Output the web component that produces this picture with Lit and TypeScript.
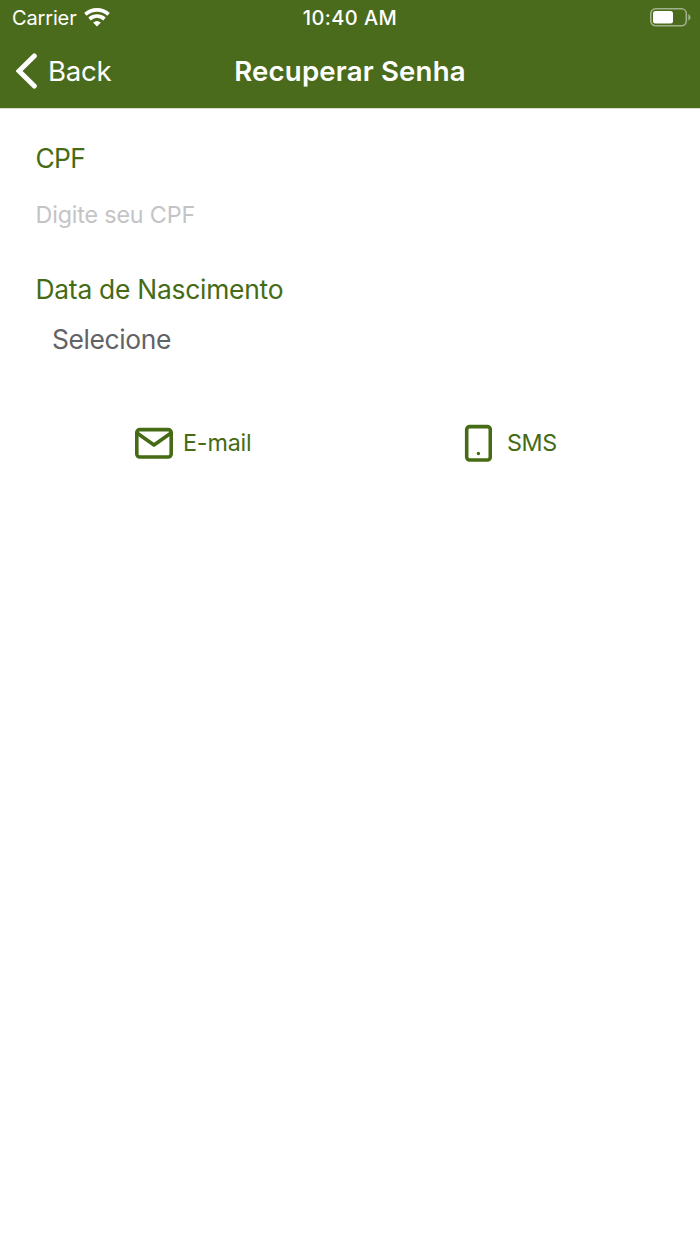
import { LitElement, html, css } from "lit";
import { customElement } from "lit/decorators.js";

@customElement("app-root")
export class AppRoot extends LitElement {
  static styles = css`
    :host {
      display: block;
      min-height: 1244px;
      background: #fff;
      color: #456b15;
      font-family: Inter, "Liberation Sans", sans-serif;
      white-space: nowrap;
    }
    svg { display: block; flex: none; }
    header {
      box-sizing: border-box;
      height: 109px;
      background: #4a6b1c;
      border-bottom: 1px solid #d5dacd;
      color: #fff;
    }
    .status, .nav {
      display: grid;
      grid-template-columns: 1fr auto 1fr;
      align-items: center;
    }
    .status { height: 35px; padding: 0 9px 0 12px; font-size: 20px; }
    .nav { height: 71px; padding: 0 16px; }
    .left { display: flex; align-items: center; }
    .carrier { letter-spacing: -0.15px; margin: 1px 7px 0 0; }
    .time { font-weight: 500; letter-spacing: 0.4px; padding: 1px 3px 0 0; }
    .battery { justify-self: end; }
    .back { font-size: 27.6px; letter-spacing: -0.3px; margin-left: 10px; }
    .title { font-size: 27.6px; font-weight: 600; letter-spacing: 0.18px; }
    main { display: flex; flex-direction: column; padding: 32px 35.5px 0; }
    .label { font-size: 26.4px; line-height: 34px; letter-spacing: -0.25px; }
    .cpf { letter-spacing: -0.7px; }
    .placeholder { font-size: 23.3px; line-height: 30px; margin-top: 25px; color: #c4c4c6; letter-spacing: -0.16px; }
    .second { margin-top: 42px; }
    .select { font-size: 26.4px; line-height: 34px; margin: 16px 0 0 16.5px; color: #636366; letter-spacing: -0.38px; }
    .options { display: grid; grid-template-columns: 330px 1fr; margin-top: 66px; padding-left: 98.5px; }
    .option { display: flex; align-items: center; height: 42px; font-size: 23.3px; }
    .email { margin: 0 0 0 10px; line-height: 28px; letter-spacing: -0.15px; }
    .sms { margin: 0 0 0 15px; line-height: 28px; letter-spacing: -0.4px; }
  `;

  render() {
    return html`
      <header>
        <div class="status">
          <div class="left">
            <span class="carrier">Carrier</span>
            <svg width="26" height="19" viewBox="0 0 26 19" fill="none" stroke="#fff" stroke-width="3.7">
              <path d="M1.4 6.3C8 .4 18 .4 24.6 6.3" />
              <path d="M5.5 11C10 7.2 16 7.2 20.5 11" />
              <path d="M9.1 14.5Q13 11.5 16.9 14.5L13 18.5Z" fill="#fff" stroke="none" />
            </svg>
          </div>
          <span class="time">10:40 AM</span>
          <svg class="battery" width="41" height="19" viewBox="0 0 41 19">
            <rect x="0.8" y="0.8" width="35.5" height="17" rx="4.8" fill="none" stroke="#a1b18b" stroke-width="1.6" />
            <rect x="3" y="3" width="20" height="12.6" rx="2.5" fill="#fff" />
            <path d="M38.3 6.3C41.2 7.6 41.2 11.3 38.3 12.6Z" fill="#a1b18b" />
          </svg>
        </div>
        <div class="nav">
          <div class="left">
            <svg width="22" height="36" viewBox="0 0 22 36">
              <path d="M18.3 3L3 18L18.3 33" fill="none" stroke="#fff" stroke-width="5" stroke-linecap="round" />
            </svg>
            <span class="back">Back</span>
          </div>
          <span class="title">Recuperar Senha</span>
        </div>
      </header>
      <main>
        <div class="label cpf">CPF</div>
        <div class="placeholder">Digite seu CPF</div>
        <div class="label second">Data de Nascimento</div>
        <div class="select">Selecione</div>
        <div class="options">
          <div class="option">
            <svg width="39" height="32" viewBox="0 0 39 32" fill="none" stroke="#456b15" stroke-width="3.6">
              <rect x="2.8" y="2.6" width="34.4" height="27.4" rx="3" />
              <path d="M3 6L20 18L37 6" stroke-linejoin="round" />
            </svg>
            <span class="email">E-mail</span>
          </div>
          <div class="option">
            <svg width="28" height="38" viewBox="0 0 28 38">
              <rect x="2.7" y="2.6" width="23.6" height="33.4" rx="3" fill="none" stroke="#456b15" stroke-width="3.6" />
              <circle cx="14.4" cy="29.5" r="1.7" fill="#456b15" />
            </svg>
            <span class="sms">SMS</span>
          </div>
        </div>
      </main>
    `;
  }
}
